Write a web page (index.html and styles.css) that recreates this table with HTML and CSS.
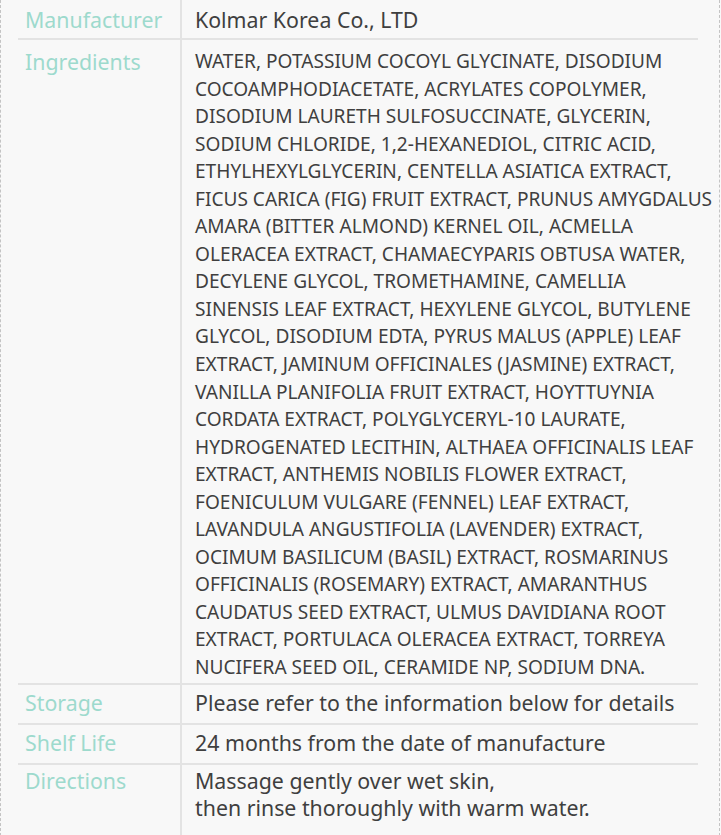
FILE: index.html
```html
<!DOCTYPE html>
<html lang="en">
<head>
<meta charset="utf-8">
<title>Product information</title>
<link rel="stylesheet" href="styles.css">
</head>
<body>
<div class="frame">
  <table class="info">
    <tr class="row first">
      <th class="label">Manufacturer</th>
      <td class="value">Kolmar Korea Co., LTD</td>
    </tr>
    <tr class="row long">
      <th class="label">Ingredients</th>
      <td class="value small">WATER, POTASSIUM COCOYL GLYCINATE, DISODIUM<br>COCOAMPHODIACETATE, ACRYLATES COPOLYMER,<br>DISODIUM LAURETH SULFOSUCCINATE, GLYCERIN,<br>SODIUM CHLORIDE, 1,2-HEXANEDIOL, CITRIC ACID,<br>ETHYLHEXYLGLYCERIN, CENTELLA ASIATICA EXTRACT,<br>FICUS CARICA (FIG) FRUIT EXTRACT, PRUNUS AMYGDALUS<br>AMARA (BITTER ALMOND) KERNEL OIL, ACMELLA<br>OLERACEA EXTRACT, CHAMAECYPARIS OBTUSA WATER,<br>DECYLENE GLYCOL, TROMETHAMINE, CAMELLIA<br>SINENSIS LEAF EXTRACT, HEXYLENE GLYCOL, BUTYLENE<br>GLYCOL, DISODIUM EDTA, PYRUS MALUS (APPLE) LEAF<br>EXTRACT, JAMINUM OFFICINALES (JASMINE) EXTRACT,<br>VANILLA PLANIFOLIA FRUIT EXTRACT, HOYTTUYNIA<br>CORDATA EXTRACT, POLYGLYCERYL-10 LAURATE,<br>HYDROGENATED LECITHIN, ALTHAEA OFFICINALIS LEAF<br>EXTRACT, ANTHEMIS NOBILIS FLOWER EXTRACT,<br>FOENICULUM VULGARE (FENNEL) LEAF EXTRACT,<br>LAVANDULA ANGUSTIFOLIA (LAVENDER) EXTRACT,<br>OCIMUM BASILICUM (BASIL) EXTRACT, ROSMARINUS<br>OFFICINALIS (ROSEMARY) EXTRACT, AMARANTHUS<br>CAUDATUS SEED EXTRACT, ULMUS DAVIDIANA ROOT<br>EXTRACT, PORTULACA OLERACEA EXTRACT, TORREYA<br>NUCIFERA SEED OIL, CERAMIDE NP, SODIUM DNA.</td>
    </tr>
    <tr class="row">
      <th class="label">Storage</th>
      <td class="value">Please refer to the information below for details</td>
    </tr>
    <tr class="row">
      <th class="label">Shelf Life</th>
      <td class="value">24 months from the date of manufacture</td>
    </tr>
    <tr class="row last">
      <th class="label">Directions</th>
      <td class="value">Massage gently over wet skin,<br>then rinse thoroughly with warm water.</td>
    </tr>
  </table>
</div>
</body>
</html>
```

FILE: styles.css
```css
html, body {
  margin: 0;
  padding: 0;
  background: #f8f8f8;
}

body {
  font-family: "Noto Sans", "Open Sans", sans-serif;
  overflow: hidden;
}

.frame {
  width: 701px;
  min-height: 835px;
  border-left: 1px dashed #c4c4c4;
  border-right: 1px dashed #c4c4c4;
  padding-left: 17px;
  box-sizing: content-box;
}

.info {
  width: 680px;
  border-collapse: collapse;
  table-layout: fixed;
}

.row {
  border-bottom: 2px solid #e3e3e3;
}

.row.last {
  border-bottom: none;
}

.label {
  width: 163px;
  box-sizing: border-box;
  padding: 4px 7px 7px;
  text-align: left;
  vertical-align: top;
  font-weight: 400;
  font-size: 21.33px;
  line-height: 27px;
  color: #9ddacd;
  border-right: 2px solid #e3e3e3;
}

.value {
  padding: 4px 0 7px 13px;
  vertical-align: top;
  font-size: 21.33px;
  line-height: 27px;
  color: #3f3f3f;
  white-space: nowrap;
  overflow: visible;
}

.first .label,
.first .value {
  padding-top: 6px;
  padding-bottom: 5px;
}

.long .label {
  padding-top: 8px;
}

.value.small {
  font-size: 19.1px;
  line-height: 27.55px;
  padding-top: 8px;
  padding-bottom: 1px;
}

.last .label,
.last .value {
  padding-top: 2px;
  padding-bottom: 20px;
}
```
